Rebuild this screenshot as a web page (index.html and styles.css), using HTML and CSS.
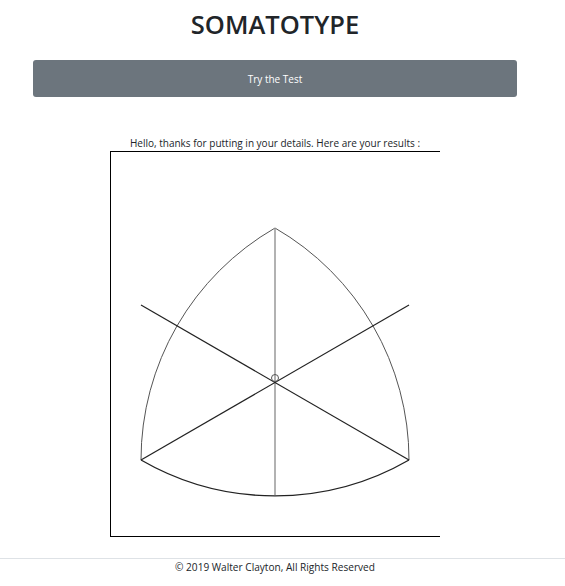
FILE: index.html
```html
<!DOCTYPE html>
<html>
<head>
<meta charset="utf-8">
<link rel="stylesheet" href="styles.css">
</head>
<body>
<div class="page">
  <h1 class="title">SOMATOTYPE</h1>
  <div class="actions"><a class="btn" href="#">Try the Test</a></div>
  <p class="intro">Hello, thanks for putting in your details. Here are your results :</p>
  <div class="chart">
    <svg width="329" height="384" viewBox="0 0 329 384">
      <path d="M164,76 A268,268 0 0 0 30,308" fill="none" stroke="#555" stroke-width="1"/>
      <path d="M298,308 A268,268 0 0 0 164,76" fill="none" stroke="#555" stroke-width="1"/>
      <path d="M30,308 A268,268 0 0 0 298,308" fill="none" stroke="#222" stroke-width="1.3"/>
      <line x1="164" y1="76" x2="164" y2="343" stroke="#999" stroke-width="1.5"/>
      <line x1="30" y1="153" x2="298" y2="308" stroke="#222" stroke-width="1.2"/>
      <line x1="298" y1="153" x2="30" y2="308" stroke="#222" stroke-width="1.2"/>
      <circle cx="164" cy="226" r="3.5" fill="none" stroke="#555" stroke-width="1"/>
    </svg>
  </div>
</div>
<footer class="footer">
  <div class="footer-inner">© 2019 Walter Clayton, All Rights Reserved</div>
</footer>
</body>
</html>
```
FILE: styles.css
```css
html, body {
  margin: 0;
  padding: 0;
  background: #fff;
}
body {
  font-family: "Open Sans", "Noto Sans", sans-serif;
  color: #212529;
}
.page {
  width: 550px;
  display: flex;
  flex-direction: column;
  align-items: center;
}
.title {
  margin: 6px 0 0;
  font-size: 25.5px;
  line-height: 36px;
  font-weight: 600;
  letter-spacing: 0;
}
.actions {
  margin-top: 18px;
  width: 484px;
}
.btn {
  display: flex;
  align-items: center;
  justify-content: center;
  height: 37px;
  background: #6c757d;
  color: #fff;
  border-radius: 3px;
  font-size: 10px;
  text-decoration: none;
}
.intro {
  margin: 39px 0 0;
  font-size: 10px;
  line-height: 14px;
}
.chart {
  margin-top: 1px;
  width: 329px;
  height: 384px;
  border-top: 1px solid #000;
  border-left: 1px solid #000;
  border-bottom: 1px solid #000;
}
.chart svg {
  display: block;
}
.footer {
  margin-top: 21px;
  border-top: 1px solid #dee2e6;
}
.footer-inner {
  width: 550px;
  text-align: center;
  font-size: 10.1px;
  line-height: 16px;
}
```
